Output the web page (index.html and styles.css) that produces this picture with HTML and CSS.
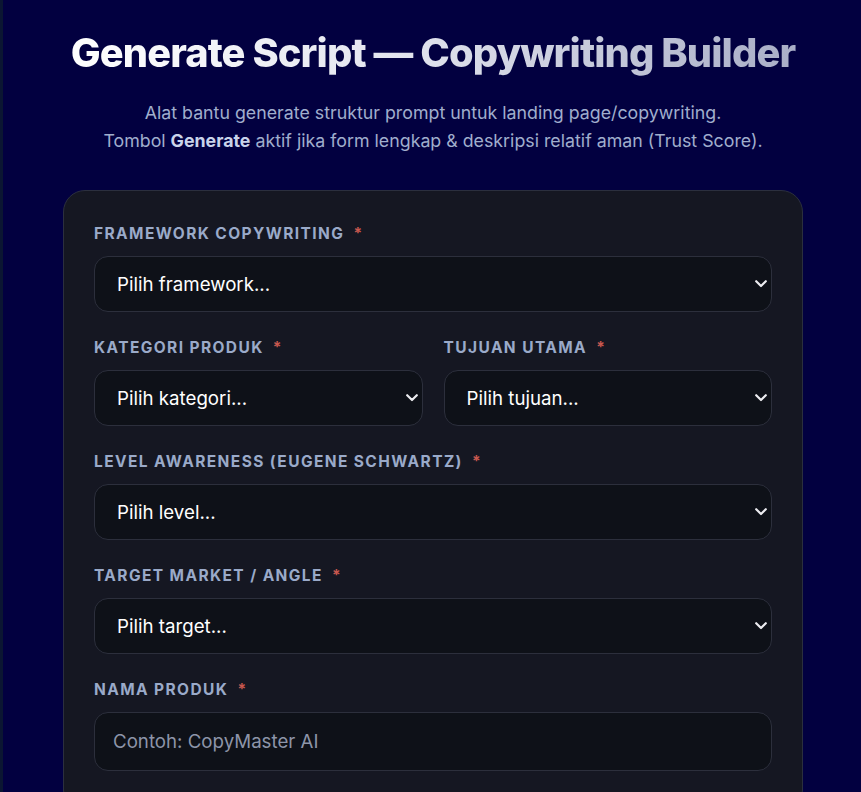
FILE: index.html
```html
<!DOCTYPE html>
<html lang="id">
<head>
<meta charset="utf-8">
<title>Generate Script — Copywriting Builder</title>
<link rel="stylesheet" href="styles.css">
</head>
<body>
<main class="page">
  <header class="hero">
    <h1 class="title">Generate Script — Copywriting Builder</h1>
    <p class="subtitle">Alat bantu generate struktur prompt untuk landing page/copywriting.<br>Tombol <strong>Generate</strong> aktif jika form lengkap &amp; deskripsi relatif aman (Trust Score).</p>
  </header>
  <form class="card">
    <div class="field">
      <label class="label">Framework Copywriting <span class="req">*</span></label>
      <div class="select-wrap">
        <select class="control"><option>Pilih framework...</option></select>
        <svg class="chev" width="12" height="8" viewBox="0 0 12 8"><polyline points="1.2,1.2 6,6 10.8,1.2" fill="none" stroke="#ececf0" stroke-width="2.2" stroke-linecap="round" stroke-linejoin="round"/></svg>
      </div>
    </div>
    <div class="row">
      <div class="field">
        <label class="label">Kategori Produk <span class="req">*</span></label>
        <div class="select-wrap">
          <select class="control"><option>Pilih kategori...</option></select>
          <svg class="chev" width="12" height="8" viewBox="0 0 12 8"><polyline points="1.2,1.2 6,6 10.8,1.2" fill="none" stroke="#ececf0" stroke-width="2.2" stroke-linecap="round" stroke-linejoin="round"/></svg>
        </div>
      </div>
      <div class="field">
        <label class="label">Tujuan Utama <span class="req">*</span></label>
        <div class="select-wrap">
          <select class="control"><option>Pilih tujuan...</option></select>
          <svg class="chev" width="12" height="8" viewBox="0 0 12 8"><polyline points="1.2,1.2 6,6 10.8,1.2" fill="none" stroke="#ececf0" stroke-width="2.2" stroke-linecap="round" stroke-linejoin="round"/></svg>
        </div>
      </div>
    </div>
    <div class="field">
      <label class="label">Level Awareness (Eugene Schwartz) <span class="req">*</span></label>
      <div class="select-wrap">
        <select class="control"><option>Pilih level...</option></select>
        <svg class="chev" width="12" height="8" viewBox="0 0 12 8"><polyline points="1.2,1.2 6,6 10.8,1.2" fill="none" stroke="#ececf0" stroke-width="2.2" stroke-linecap="round" stroke-linejoin="round"/></svg>
      </div>
    </div>
    <div class="field">
      <label class="label">Target Market / Angle <span class="req">*</span></label>
      <div class="select-wrap">
        <select class="control"><option>Pilih target...</option></select>
        <svg class="chev" width="12" height="8" viewBox="0 0 12 8"><polyline points="1.2,1.2 6,6 10.8,1.2" fill="none" stroke="#ececf0" stroke-width="2.2" stroke-linecap="round" stroke-linejoin="round"/></svg>
      </div>
    </div>
    <div class="field">
      <label class="label">Nama Produk <span class="req">*</span></label>
      <input class="control input" type="text" placeholder="Contoh: CopyMaster AI">
    </div>
  </form>
</main>
</body>
</html>
```
FILE: styles.css
```css
html {
  background: #020040;
  color-scheme: dark;
}
body {
  margin: 0;
  border-left: 3px solid #0b1632;
  padding-left: 2px;
  background: #020040;
  font-family: Inter, "Noto Sans", sans-serif;
  color: #e6e9f2;
  min-height: 100vh;
}
.page {
  width: 740px;
  margin: 0 auto;
  padding-top: 28px;
}
.hero {
  text-align: center;
}
.title {
  margin: 0;
  font-size: 39.8px;
  line-height: 50px;
  font-weight: 800;
  letter-spacing: -0.9px;
  background: linear-gradient(90deg, #ffffff 0%, #e3e5ef 45%, #a8adc6 100%);
  -webkit-background-clip: text;
  background-clip: text;
  color: transparent;
}
.subtitle {
  margin: 21px 0 0;
  font-size: 17.8px;
  line-height: 28px;
  color: #a0aecd;
}
.subtitle strong {
  color: #c9d3ea;
  font-weight: 700;
}
.card {
  margin-top: 35px;
  background: #151722;
  border: 1px solid #2b2f3e;
  border-radius: 22px;
  padding: 33px 30px 40px;
  display: flex;
  flex-direction: column;
  gap: 26px;
}
.row {
  display: grid;
  grid-template-columns: 1fr 1fr;
  gap: 21px;
}
.field {
  display: flex;
  flex-direction: column;
  gap: 12px;
}
.label {
  font-size: 15.5px;
  line-height: 20px;
  font-weight: 700;
  letter-spacing: 1.4px;
  text-transform: uppercase;
  color: #9aaac9;
}
.req {
  color: #c8574f;
  margin-left: 4px;
}
.select-wrap {
  position: relative;
}
.chev {
  position: absolute;
  right: 5px;
  top: 50%;
  margin-top: -4px;
  pointer-events: none;
}
.control {
  box-sizing: border-box;
  display: block;
  width: 100%;
  height: 56px;
  background-color: #0e1118;
  border: 1px solid #2c2f3c;
  border-radius: 14px;
  color: #ffffff;
  font-family: Inter, "Noto Sans", sans-serif;
  font-size: 18.7px;
  padding: 0 24px 0 22px;
  appearance: none;
  -webkit-appearance: none;
  outline: none;
}
.input {
  height: 59px;
  padding: 0 18px;
}
.input::placeholder {
  color: #8d95a9;
}
```
